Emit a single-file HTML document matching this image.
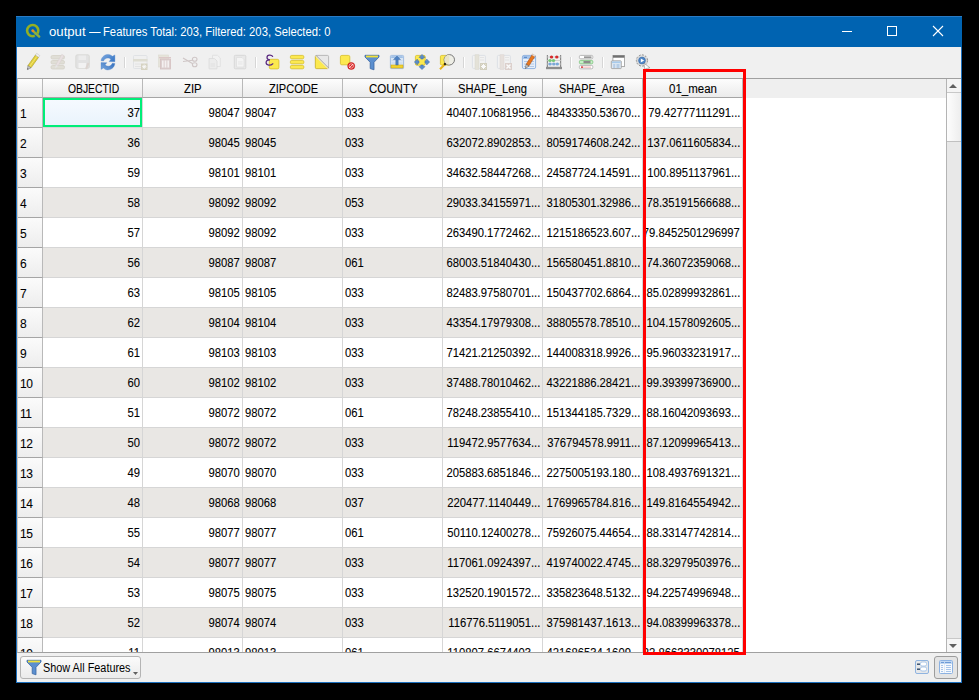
<!DOCTYPE html><html><head><meta charset="utf-8"><style>
*{margin:0;padding:0;box-sizing:border-box}
html,body{width:979px;height:700px;overflow:hidden;background:#000;font-family:"Liberation Sans",sans-serif;font-size:12px;color:#000}
.a{position:absolute}
svg{overflow:visible}
#win{left:16px;top:16px;width:946px;height:667px;background:#f0f0f0;border:1px solid #1c70be;border-top:none}
#title{left:16px;top:16px;width:946px;height:31px;background:#0063b1;border-top:1px solid #2a7cc6}
.ttext{top:25px;color:#fff;white-space:nowrap;line-height:14px}
#tbl{left:17px;top:78px;width:944px;height:575px;background:#fff;border-top:1px solid #a0a0a0;border-left:1px solid #cdc6be;border-bottom:1px solid #a0a0a0;overflow:hidden}
.hd{top:0;height:19px;background:linear-gradient(#fdfdfd,#ebebeb);border-right:1px solid #b9b9b9;border-bottom:1px solid #a5a5a5;text-align:center;line-height:20px;white-space:nowrap}
.vh{left:0;width:25px;background:linear-gradient(#fbfbfb,#ededed);border-right:1px solid #b9b9b9;border-bottom:1px solid #a5a5a5;padding-left:2px;line-height:33px;overflow:hidden;letter-spacing:-0.5px;-webkit-text-stroke:0.08px #000}
.c{height:30px;line-height:31px;border-right:1px solid #d6d6d6;border-bottom:1px solid #d6d6d6;white-space:nowrap;overflow:hidden;font-size:12.5px;-webkit-text-stroke:0.08px #000}
.c span{display:inline-block;transform:scaleX(0.9)}
.r span{transform-origin:100% 50%}
.l span{transform-origin:0 50%}
.r{display:flex;justify-content:flex-end;padding-right:2px}
.l{padding-left:2px}
.alt{background:#e9e7e4}
</style></head><body>
<div id="win" class="a"></div>
<div id="title" class="a"></div>
<svg class="a" style="left:24px;top:22px" width="18" height="18" viewBox="0 0 18 18"><circle cx="8.7" cy="8.6" r="5.6" fill="none" stroke="#93b023" stroke-width="2.6"/><path d="M11.5 12.5 L15 15.2" stroke="#0063b1" stroke-width="3.6"/><path d="M8.6 8.6 L15.2 14.6" stroke="#8cb040" stroke-width="2.4" stroke-linecap="round"/><circle cx="8.9" cy="8.8" r="1.4" fill="#f08a1c"/></svg>
<div class="a ttext" style="left:48.9px;transform:scaleX(1.097);transform-origin:0 0">output</div>
<div class="a ttext" style="left:89.2px;transform:scaleX(0.96);transform-origin:0 0">—</div>
<div class="a ttext" style="left:103.06px;transform:scaleX(0.9375);transform-origin:0 0">Features Total: 203, Filtered: 203, Selected: 0</div>
<svg class="a" style="left:830px;top:16px" width="130" height="31"><g stroke="#fff" stroke-width="1" fill="none" shape-rendering="crispEdges"><line x1="12" y1="15.5" x2="22" y2="15.5"/><rect x="57.5" y="10.5" width="9" height="9"/></g><g stroke="#fff" stroke-width="1.1" fill="none"><line x1="103" y1="10" x2="113" y2="20"/><line x1="113" y1="10" x2="103" y2="20"/></g></svg>
<svg class="a" style="left:24px;top:54px" width="16" height="16" viewBox="0 0 16 16"><path d="M3.89 11.64 L11.49 1.02 L14.59 3.24 L6.99 13.86 Z" fill="#e2d03c" stroke="#a89820" stroke-width="0.6" stroke-linejoin="round"/><path d="M5.44 12.75 L13.04 2.13" stroke="#f4e878" stroke-width="0.9"/><path d="M11.49 1.02 L12.65 -0.61 L15.75 1.61 L14.59 3.24 Z" fill="#f4f4f4" stroke="#b4b4b4" stroke-width="0.5"/><path d="M3.89 11.64 L6.99 13.86 L3.4 15.6 Z" fill="#c8c8c8" stroke="#707070" stroke-width="0.5" stroke-linejoin="round"/><path d="M3.4 15.6 L3.59 14.13 L4.73 14.95 Z" fill="#303030"/></svg>
<svg class="a" style="left:49px;top:54px" width="16" height="16" viewBox="0 0 16 16"><g fill="#e0ded6" stroke="#d4d2c8" stroke-width="0.8"><rect x="2" y="1.5" width="13.5" height="3.5" rx="1.5"/><rect x="2" y="6.5" width="13.5" height="3.5" rx="1.5"/><rect x="2" y="11.5" width="13.5" height="3.5" rx="1.5"/></g><g transform="rotate(30 10 8)"><rect x="8.6" y="0" width="2.6" height="12" fill="#e8e0e0" stroke="#d8d0d0" stroke-width="0.5"/><path d="M8.6 12 L11.2 12 L9.9 15.5Z" fill="#e6e6e6"/></g></svg>
<svg class="a" style="left:74px;top:54px" width="16" height="16" viewBox="0 0 16 16"><rect x="1.8" y="0.8" width="13.5" height="13.5" rx="1.5" fill="#e2e2e2" stroke="#d6d6d2" stroke-width="0.8"/><rect x="4.5" y="1.5" width="7.5" height="4.5" fill="#ececec"/><rect x="4.5" y="9" width="7.5" height="5" fill="#f2f2f2"/><path d="M12 15 L14.5 9" stroke="#dcd4d0" stroke-width="2"/></svg>
<svg class="a" style="left:99px;top:54px" width="16" height="16" viewBox="0 0 16 16"><defs><linearGradient id="rg1" x1="0" y1="0" x2="1" y2="0.6"><stop offset="0" stop-color="#7eaae0"/><stop offset="1" stop-color="#3f7cc8"/></linearGradient><linearGradient id="rg2" x1="1" y1="0.3" x2="0" y2="1"><stop offset="0" stop-color="#3a74c0"/><stop offset="1" stop-color="#7aa8de"/></linearGradient></defs><path d="M2 6.8 C2.6 2.2 6.5 0.3 9.3 0.4 C11.4 0.5 12.6 1.5 13.4 2.3 L15.9 0.9 L15.9 7.7 L10 7.6 L11.8 5.5 C11 4.6 10 4.1 8.8 4.1 C6.5 4.1 5.2 5.6 4.6 7 Z" fill="url(#rg1)" stroke="#4a7fc4" stroke-width="0.3"/><path d="M15.9 9.5 C15.3 14.1 11.4 16 8.6 15.9 C6.5 15.8 5.3 14.8 4.5 14 L2 15.4 L2 8.6 L7.9 8.7 L6.1 10.8 C6.9 11.7 7.9 12.2 9.1 12.2 C11.4 12.2 12.7 10.7 13.3 9.3 Z" fill="url(#rg2)" stroke="#4a7fc4" stroke-width="0.3"/></svg>
<div class="a" style="left:124px;top:57px;width:1px;height:11px;background:#d6d6d6"></div><div class="a" style="left:125px;top:57px;width:1px;height:11px;background:#fff"></div>
<svg class="a" style="left:132px;top:54px" width="18" height="16" viewBox="0 0 18 16"><rect x="1.5" y="1.5" width="13.5" height="13" rx="1" fill="#f0f0f0" stroke="#dcdee2" stroke-width="0.8"/><rect x="1" y="5" width="14.5" height="2.5" fill="#deddd2"/><g stroke="#e0e0e0" stroke-width="0.8"><line x1="3" y1="10" x2="9" y2="10"/><line x1="3" y1="12.5" x2="9" y2="12.5"/></g><rect x="9" y="9.5" width="6.5" height="6.5" fill="#d6d3c2"/><path d="M12.2 10.5 V15 M10 12.7 H14.5 M10.8 11.2 L13.8 14.2 M13.8 11.2 L10.8 14.2" stroke="#f8f8f8" stroke-width="0.9"/></svg>
<svg class="a" style="left:157px;top:54px" width="16" height="16" viewBox="0 0 16 16"><rect x="1.5" y="1" width="10" height="12" fill="#e6e4da" stroke="#dcdad0" stroke-width="0.6"/><rect x="2" y="3" width="12" height="1.2" fill="#dcc8c8"/><rect x="3.5" y="5" width="10" height="10" fill="#ddd0d0" stroke="#d4c0c0" stroke-width="0.8"/><g fill="#f4f0f0"><rect x="5" y="6.5" width="1.6" height="7"/><rect x="7.7" y="6.5" width="1.6" height="7"/><rect x="10.4" y="6.5" width="1.6" height="7"/></g></svg>
<svg class="a" style="left:182px;top:54px" width="16" height="16" viewBox="0 0 16 16"><g fill="none" stroke="#cfc6c6" stroke-width="1.1"><ellipse cx="12.7" cy="5.3" rx="2.3" ry="2"/><ellipse cx="12.7" cy="10.8" rx="2.3" ry="2"/><path d="M1 4 L10.8 9.8 M1 7.5 L10.8 6.2"/></g></svg>
<svg class="a" style="left:207px;top:54px" width="16" height="16" viewBox="0 0 16 16"><path d="M5.5 1.3 H10.5 L13.3 4 V12.5 H5.5 Z" fill="#f2f2f2" stroke="#dedede" stroke-width="0.8"/><path d="M2 4.5 H7.5 L10 7 V14.8 H2 Z" fill="#ececec" stroke="#dadada" stroke-width="0.8"/><g stroke="#dcdcdc" stroke-width="0.7"><line x1="3.5" y1="10" x2="8" y2="10"/><line x1="3.5" y1="12" x2="8" y2="12"/></g></svg>
<svg class="a" style="left:232px;top:54px" width="16" height="16" viewBox="0 0 16 16"><rect x="2.3" y="1.3" width="11.5" height="13.5" rx="1" fill="#e8e8e8" stroke="#d6d6d6" stroke-width="0.9"/><path d="M4.5 3.5 H10 L12 5.5 V13 H4.5 Z" fill="#f4f4f4" stroke="#dadada" stroke-width="0.6"/><g stroke="#dcdcdc" stroke-width="0.6"><line x1="6" y1="8" x2="10.5" y2="8"/><line x1="6" y1="10" x2="10.5" y2="10"/></g></svg>
<div class="a" style="left:255px;top:57px;width:1px;height:11px;background:#d6d6d6"></div><div class="a" style="left:256px;top:57px;width:1px;height:11px;background:#fff"></div>
<svg class="a" style="left:264px;top:54px" width="16" height="16" viewBox="0 0 16 16"><rect x="5.3" y="5.3" width="9.6" height="9.6" rx="1.5" fill="#fce94f" stroke="#d6bd26" stroke-width="0.8"/><path d="M8.6 2.4 C7.4 0.6 3 0.7 3 3.4 C3 5 4.3 5.8 6 5.8 C3.9 5.8 2.1 6.8 2.1 8.6 C2.1 11.6 6.6 11.9 8.8 9.8" fill="none" stroke="#5a2a80" stroke-width="1.25" stroke-linecap="round"/></svg>
<svg class="a" style="left:289px;top:54px" width="16" height="16" viewBox="0 0 16 16"><g fill="#fce94f" stroke="#d6bd26" stroke-width="0.8"><rect x="1.4" y="1.4" width="13.4" height="3.4" rx="1.3"/><rect x="1.4" y="6.4" width="13.4" height="3.4" rx="1.3"/><rect x="1.4" y="11.4" width="13.4" height="3.4" rx="1.3"/></g></svg>
<svg class="a" style="left:314px;top:54px" width="16" height="16" viewBox="0 0 16 16"><rect x="1.4" y="1.4" width="13.2" height="13.2" rx="1.2" fill="#e8e8e8" stroke="#ababab" stroke-width="0.8"/><path d="M1.4 2 L14 14.6 H2.6 A1.2 1.2 0 0 1 1.4 13.4 Z" fill="#fce94f" stroke="#d6bd26" stroke-width="0.8"/><path d="M1.9 1.3 L14.7 14.1" stroke="#8a8a8a" stroke-width="0.8"/><path d="M1.4 2 L14 14.6" stroke="#fff" stroke-width="0.8"/></svg>
<svg class="a" style="left:339px;top:54px" width="16" height="16" viewBox="0 0 16 16"><rect x="1.4" y="1.4" width="9.4" height="9.4" rx="1.4" fill="#fce94f" stroke="#d6bd26" stroke-width="0.8"/><circle cx="12.2" cy="12" r="3.6" fill="#d91c1c" stroke="#c01010" stroke-width="0.4"/><circle cx="12.2" cy="12" r="2.2" fill="none" stroke="#f6c8c8" stroke-width="0.8"/><path d="M10.3 13.9 L14.1 10.1" stroke="#fff" stroke-width="0.9"/></svg>
<svg class="a" style="left:364px;top:54px" width="16" height="16" viewBox="0 0 16 16"><path d="M1 1.3 H15 V3 L10 8.3 V15.8 L6.2 14.6 V8.3 L1 3 Z" fill="#5b8fcf" stroke="#3b67a3" stroke-width="0.8" stroke-linejoin="round"/><rect x="2" y="1.6" width="12" height="1.8" fill="#f2e23a"/></svg>
<svg class="a" style="left:389px;top:54px" width="16" height="16" viewBox="0 0 16 16"><rect x="1.4" y="1.4" width="13.2" height="13.2" rx="1" fill="#d9e6f5" stroke="#8fb1dc" stroke-width="0.8"/><rect x="2.2" y="2.2" width="11.6" height="1.8" fill="#9fc0e6"/><g stroke="#c6d6ea" stroke-width="0.8"><line x1="2.5" y1="6.5" x2="13.5" y2="6.5"/><line x1="2.5" y1="9" x2="13.5" y2="9"/></g><rect x="2" y="11" width="12" height="3" fill="#f2d22e" stroke="#c9a818" stroke-width="0.6"/><path d="M8 2 L11.5 5.5 H9.2 V11 H6.8 V5.5 H4.5 Z" fill="#4d82c4" stroke="#335f99" stroke-width="0.4"/></svg>
<svg class="a" style="left:414px;top:54px" width="16" height="16" viewBox="0 0 16 16"><rect x="1.4" y="1.4" width="9.8" height="9.8" rx="1.3" fill="#fce94f" stroke="#d6bd26" stroke-width="0.8"/><g fill="#5b8dcc" stroke="#3d6aa8" stroke-width="0.5" stroke-linejoin="round"><path d="M8 0.4 L11 3.4 L9.2 3.4 L9.2 5 L6.8 5 L6.8 3.4 L5 3.4 Z"/><path d="M8 15.6 L11 12.6 L9.2 12.6 L9.2 11 L6.8 11 L6.8 12.6 L5 12.6 Z"/><path d="M0.4 8 L3.4 5 L3.4 6.8 L5 6.8 L5 9.2 L3.4 9.2 L3.4 11 Z"/><path d="M15.6 8 L12.6 5 L12.6 6.8 L11 6.8 L11 9.2 L12.6 9.2 L12.6 11 Z"/></g></svg>
<svg class="a" style="left:439px;top:54px" width="16" height="16" viewBox="0 0 16 16"><rect x="1.4" y="1.4" width="9.6" height="9.6" rx="1.3" fill="#fce94f" stroke="#d6bd26" stroke-width="0.8"/><circle cx="10.3" cy="5.8" r="5.2" fill="#eeeee6" stroke="#6c6c6c" stroke-width="0.9"/><path d="M10.3 0.8 A5 5 0 0 0 10.3 10.8 Z" fill="#e8e4c8"/><path d="M6.3 9.8 L1 15.3" stroke="#e7b416" stroke-width="2"/><path d="M6.6 9.4 L5.3 10.8" stroke="#111" stroke-width="2"/></svg>
<div class="a" style="left:463px;top:57px;width:1px;height:11px;background:#d6d6d6"></div><div class="a" style="left:464px;top:57px;width:1px;height:11px;background:#fff"></div>
<svg class="a" style="left:471px;top:54px" width="16" height="16" viewBox="0 0 16 16"><rect x="1.4" y="1.4" width="13" height="13" rx="1" fill="#f2f2f2" stroke="#d8dce2" stroke-width="0.8"/><rect x="4" y="0.8" width="4" height="14.5" fill="#e4e2d8" stroke="#d8d6cc" stroke-width="0.5"/><g stroke="#dcdcdc" stroke-width="0.7"><line x1="9" y1="3.5" x2="13" y2="3.5"/><line x1="9" y1="6" x2="13" y2="6"/></g><rect x="9" y="9" width="7" height="7" fill="#d2cfbe"/><path d="M12.5 10 V15 M10 12.5 H15 M10.7 10.7 L14.3 14.3 M14.3 10.7 L10.7 14.3" stroke="#fafafa" stroke-width="1"/></svg>
<svg class="a" style="left:496px;top:54px" width="16" height="16" viewBox="0 0 16 16"><rect x="1.4" y="1.4" width="13" height="13" rx="1" fill="#f2f2f2" stroke="#d8dce2" stroke-width="0.8"/><rect x="4" y="0.8" width="4" height="14.5" fill="#e6e0dc" stroke="#dcd4d0" stroke-width="0.5"/><g stroke="#dcdcdc" stroke-width="0.7"><line x1="9" y1="3.5" x2="13" y2="3.5"/><line x1="9" y1="6" x2="13" y2="6"/></g><rect x="9" y="9" width="7" height="7" fill="#dcd0cc"/><path d="M10.5 10.5 L14.5 14.5 M14.5 10.5 L10.5 14.5" stroke="#fafafa" stroke-width="1.4"/></svg>
<svg class="a" style="left:521px;top:54px" width="16" height="16" viewBox="0 0 16 16"><rect x="1.4" y="1.4" width="13.2" height="13.2" rx="1.5" fill="#e6eef8" stroke="#86acdc" stroke-width="0.9"/><rect x="2" y="2" width="12" height="3" fill="#a6c4ea"/><rect x="3" y="2.8" width="3" height="1.2" fill="#5d8ccc"/><g stroke="#9ab8e0" stroke-width="0.7"><line x1="3" y1="7.5" x2="13" y2="7.5"/><line x1="3" y1="10" x2="13" y2="10"/><line x1="3" y1="12.5" x2="13" y2="12.5"/></g><g transform="rotate(32 8 8)"><rect x="6.8" y="-0.5" width="3.2" height="12" fill="#e6761e" stroke="#a84c10" stroke-width="0.5"/><rect x="6.8" y="-1" width="3.2" height="1.6" fill="#ddd"/><path d="M6.8 11.5 H10 L8.4 15.5 Z" fill="#d8d0c8" stroke="#505050" stroke-width="0.5"/></g></svg>
<svg class="a" style="left:546px;top:54px" width="16" height="16" viewBox="0 0 16 16"><rect x="0.8" y="1" width="1.2" height="13.5" fill="#8a8a8a"/><rect x="14" y="1" width="1.2" height="13.5" fill="#8a8a8a"/><g stroke="#c8c8c8" stroke-width="0.8"><line x1="1" y1="3" x2="15" y2="3"/><line x1="1" y1="6.5" x2="15" y2="6.5"/><line x1="1" y1="10" x2="15" y2="10"/></g><g fill="#d42a2a"><ellipse cx="5.5" cy="3" rx="1.7" ry="1.6"/><ellipse cx="10.8" cy="3" rx="1.7" ry="1.6"/></g><g fill="#78c878"><ellipse cx="4" cy="6.5" rx="1.7" ry="1.6"/><ellipse cx="7.5" cy="6.5" rx="1.7" ry="1.6"/></g><g fill="#7aa8d8"><ellipse cx="4" cy="10" rx="1.7" ry="1.6"/><ellipse cx="7.8" cy="10" rx="1.7" ry="1.6"/><ellipse cx="11.3" cy="10" rx="1.7" ry="1.6"/></g><rect x="0" y="12.8" width="16" height="2.4" fill="#8c8c8c"/></svg>
<div class="a" style="left:570px;top:57px;width:1px;height:11px;background:#d6d6d6"></div><div class="a" style="left:571px;top:57px;width:1px;height:11px;background:#fff"></div>
<svg class="a" style="left:578px;top:54px" width="16" height="16" viewBox="0 0 16 16"><rect x="1.4" y="1.4" width="13.4" height="3.4" rx="1.2" fill="#fff" stroke="#a8a8a8" stroke-width="0.8"/><rect x="6" y="2.6" width="7.5" height="1" fill="#555"/><rect x="1.4" y="6.4" width="13.4" height="3.4" rx="1.2" fill="#c6f2c6" stroke="#78c078" stroke-width="0.8"/><rect x="5.5" y="7" width="7" height="2.2" fill="#8c8c8c"/><rect x="1.4" y="11.4" width="13.4" height="3.4" rx="1.2" fill="#fff" stroke="#a8a8a8" stroke-width="0.8"/><circle cx="4" cy="13.1" r="0.9" fill="#c00"/><rect x="5" y="12.7" width="8" height="0.8" fill="#f0a0a0"/></svg>
<div class="a" style="left:602px;top:57px;width:1px;height:11px;background:#d6d6d6"></div><div class="a" style="left:603px;top:57px;width:1px;height:11px;background:#fff"></div>
<svg class="a" style="left:610px;top:54px" width="16" height="16" viewBox="0 0 16 16"><rect x="2.9" y="1.4" width="11.6" height="11.2" fill="#fff" stroke="#9a9a9a" stroke-width="0.8"/><rect x="3" y="1.4" width="11.4" height="2.3" fill="#707070"/><rect x="1.3" y="6.8" width="10" height="7.8" rx="0.8" fill="#dfe8f2" stroke="#9a9a9a" stroke-width="0.8"/><rect x="2" y="7.5" width="8.6" height="1.6" fill="#a8cbec"/><g fill="#b6cde6"><rect x="3.2" y="10" width="2" height="4"/><rect x="6.5" y="10" width="3" height="4"/></g></svg>
<svg class="a" style="left:635px;top:54px" width="16" height="16" viewBox="0 0 16 16"><circle cx="7" cy="6.5" r="5.6" fill="none" stroke="#8a8a8a" stroke-width="1" stroke-dasharray="2 1.2"/><circle cx="7" cy="6.5" r="4.6" fill="#f0f0f0" stroke="#b0b0b0" stroke-width="0.5"/><circle cx="7" cy="6.5" r="3.5" fill="#4f86c6" stroke="#2f5f9a" stroke-width="0.5"/><path d="M5.8 4.6 L9.2 6.5 L5.8 8.4 Z" fill="#fff"/><path d="M9 9.2 L15 13.8 L12.6 14 L13.6 15.8 L12.6 16 L11.6 14.4 L9.8 15.4 Z" fill="#fff" stroke="#7a7a7a" stroke-width="0.5"/></svg>
<div id="tbl" class="a">
<div class="a" style="left:0;top:0;width:944px;height:19px;background:#efefef"></div>
<div class="a hd" style="left:0;width:25px"></div>
<div class="a hd" style="left:25px;width:100px"></div>
<div class="a hd" style="left:125px;width:100px"></div>
<div class="a hd" style="left:225px;width:100px"></div>
<div class="a hd" style="left:325px;width:100px"></div>
<div class="a hd" style="left:425px;width:100px"></div>
<div class="a hd" style="left:525px;width:100px"></div>
<div class="a hd" style="left:625px;width:100px"></div>
<div class="a" style="left:50.0px;top:2px;line-height:16px;white-space:nowrap;-webkit-text-stroke:0.1px #000;transform:scaleX(0.8621);transform-origin:0 0">OBJECTID</div>
<div class="a" style="left:166.0px;top:2px;line-height:16px;white-space:nowrap;-webkit-text-stroke:0.1px #000;transform:scaleX(0.9412);transform-origin:0 0">ZIP</div>
<div class="a" style="left:251.0px;top:2px;line-height:16px;white-space:nowrap;-webkit-text-stroke:0.1px #000;transform:scaleX(0.9231);transform-origin:0 0">ZIPCODE</div>
<div class="a" style="left:351.0px;top:2px;line-height:16px;white-space:nowrap;-webkit-text-stroke:0.1px #000;transform:scaleX(0.9592);transform-origin:0 0">COUNTY</div>
<div class="a" style="left:440.07px;top:2px;line-height:16px;white-space:nowrap;-webkit-text-stroke:0.1px #000;transform:scaleX(0.9306);transform-origin:0 0">SHAPE_Leng</div>
<div class="a" style="left:541.1px;top:2px;line-height:16px;white-space:nowrap;-webkit-text-stroke:0.1px #000;transform:scaleX(0.9014);transform-origin:0 0">SHAPE_Area</div>
<div class="a" style="left:651.0px;top:2px;line-height:16px;white-space:nowrap;-webkit-text-stroke:0.1px #000;transform:scaleX(0.9583);transform-origin:0 0">01_mean</div>
<div class="a vh" style="top:19px;height:30px">1</div>
<div class="a c r" style="left:25px;top:19px;width:100px;background:linear-gradient(#f6faff,#e9f3fc)"><span>37</span></div>
<div class="a c r" style="left:125px;top:19px;width:100px"><span>98047</span></div>
<div class="a c l" style="left:225px;top:19px;width:100px"><span>98047</span></div>
<div class="a c l" style="left:325px;top:19px;width:100px"><span>033</span></div>
<div class="a c r" style="left:425px;top:19px;width:100px"><span>40407.10681956...</span></div>
<div class="a c r" style="left:525px;top:19px;width:100px"><span>48433350.53670...</span></div>
<div class="a c r" style="left:625px;top:19px;width:100px"><span>79.42777111291...</span></div>
<div class="a vh" style="top:49px;height:30px">2</div>
<div class="a c r alt" style="left:25px;top:49px;width:100px"><span>36</span></div>
<div class="a c r alt" style="left:125px;top:49px;width:100px"><span>98045</span></div>
<div class="a c l alt" style="left:225px;top:49px;width:100px"><span>98045</span></div>
<div class="a c l alt" style="left:325px;top:49px;width:100px"><span>033</span></div>
<div class="a c r alt" style="left:425px;top:49px;width:100px"><span>632072.8902853...</span></div>
<div class="a c r alt" style="left:525px;top:49px;width:100px"><span>8059174608.242...</span></div>
<div class="a c r alt" style="left:625px;top:49px;width:100px"><span>137.0611605834...</span></div>
<div class="a vh" style="top:79px;height:30px">3</div>
<div class="a c r" style="left:25px;top:79px;width:100px"><span>59</span></div>
<div class="a c r" style="left:125px;top:79px;width:100px"><span>98101</span></div>
<div class="a c l" style="left:225px;top:79px;width:100px"><span>98101</span></div>
<div class="a c l" style="left:325px;top:79px;width:100px"><span>033</span></div>
<div class="a c r" style="left:425px;top:79px;width:100px"><span>34632.58447268...</span></div>
<div class="a c r" style="left:525px;top:79px;width:100px"><span>24587724.14591...</span></div>
<div class="a c r" style="left:625px;top:79px;width:100px"><span>100.8951137961...</span></div>
<div class="a vh" style="top:109px;height:30px">4</div>
<div class="a c r alt" style="left:25px;top:109px;width:100px"><span>58</span></div>
<div class="a c r alt" style="left:125px;top:109px;width:100px"><span>98092</span></div>
<div class="a c l alt" style="left:225px;top:109px;width:100px"><span>98092</span></div>
<div class="a c l alt" style="left:325px;top:109px;width:100px"><span>053</span></div>
<div class="a c r alt" style="left:425px;top:109px;width:100px"><span>29033.34155971...</span></div>
<div class="a c r alt" style="left:525px;top:109px;width:100px"><span>31805301.32986...</span></div>
<div class="a c r alt" style="left:625px;top:109px;width:100px"><span>78.35191566688...</span></div>
<div class="a vh" style="top:139px;height:30px">5</div>
<div class="a c r" style="left:25px;top:139px;width:100px"><span>57</span></div>
<div class="a c r" style="left:125px;top:139px;width:100px"><span>98092</span></div>
<div class="a c l" style="left:225px;top:139px;width:100px"><span>98092</span></div>
<div class="a c l" style="left:325px;top:139px;width:100px"><span>033</span></div>
<div class="a c r" style="left:425px;top:139px;width:100px"><span>263490.1772462...</span></div>
<div class="a c r" style="left:525px;top:139px;width:100px"><span>1215186523.607...</span></div>
<div class="a c r" style="left:625px;top:139px;width:100px"><span>79.8452501296997</span></div>
<div class="a vh" style="top:169px;height:30px">6</div>
<div class="a c r alt" style="left:25px;top:169px;width:100px"><span>56</span></div>
<div class="a c r alt" style="left:125px;top:169px;width:100px"><span>98087</span></div>
<div class="a c l alt" style="left:225px;top:169px;width:100px"><span>98087</span></div>
<div class="a c l alt" style="left:325px;top:169px;width:100px"><span>061</span></div>
<div class="a c r alt" style="left:425px;top:169px;width:100px"><span>68003.51840430...</span></div>
<div class="a c r alt" style="left:525px;top:169px;width:100px"><span>156580451.8810...</span></div>
<div class="a c r alt" style="left:625px;top:169px;width:100px"><span>74.36072359068...</span></div>
<div class="a vh" style="top:199px;height:30px">7</div>
<div class="a c r" style="left:25px;top:199px;width:100px"><span>63</span></div>
<div class="a c r" style="left:125px;top:199px;width:100px"><span>98105</span></div>
<div class="a c l" style="left:225px;top:199px;width:100px"><span>98105</span></div>
<div class="a c l" style="left:325px;top:199px;width:100px"><span>033</span></div>
<div class="a c r" style="left:425px;top:199px;width:100px"><span>82483.97580701...</span></div>
<div class="a c r" style="left:525px;top:199px;width:100px"><span>150437702.6864...</span></div>
<div class="a c r" style="left:625px;top:199px;width:100px"><span>85.02899932861...</span></div>
<div class="a vh" style="top:229px;height:30px">8</div>
<div class="a c r alt" style="left:25px;top:229px;width:100px"><span>62</span></div>
<div class="a c r alt" style="left:125px;top:229px;width:100px"><span>98104</span></div>
<div class="a c l alt" style="left:225px;top:229px;width:100px"><span>98104</span></div>
<div class="a c l alt" style="left:325px;top:229px;width:100px"><span>033</span></div>
<div class="a c r alt" style="left:425px;top:229px;width:100px"><span>43354.17979308...</span></div>
<div class="a c r alt" style="left:525px;top:229px;width:100px"><span>38805578.78510...</span></div>
<div class="a c r alt" style="left:625px;top:229px;width:100px"><span>104.1578092605...</span></div>
<div class="a vh" style="top:259px;height:30px">9</div>
<div class="a c r" style="left:25px;top:259px;width:100px"><span>61</span></div>
<div class="a c r" style="left:125px;top:259px;width:100px"><span>98103</span></div>
<div class="a c l" style="left:225px;top:259px;width:100px"><span>98103</span></div>
<div class="a c l" style="left:325px;top:259px;width:100px"><span>033</span></div>
<div class="a c r" style="left:425px;top:259px;width:100px"><span>71421.21250392...</span></div>
<div class="a c r" style="left:525px;top:259px;width:100px"><span>144008318.9926...</span></div>
<div class="a c r" style="left:625px;top:259px;width:100px"><span>95.96033231917...</span></div>
<div class="a vh" style="top:289px;height:30px">10</div>
<div class="a c r alt" style="left:25px;top:289px;width:100px"><span>60</span></div>
<div class="a c r alt" style="left:125px;top:289px;width:100px"><span>98102</span></div>
<div class="a c l alt" style="left:225px;top:289px;width:100px"><span>98102</span></div>
<div class="a c l alt" style="left:325px;top:289px;width:100px"><span>033</span></div>
<div class="a c r alt" style="left:425px;top:289px;width:100px"><span>37488.78010462...</span></div>
<div class="a c r alt" style="left:525px;top:289px;width:100px"><span>43221886.28421...</span></div>
<div class="a c r alt" style="left:625px;top:289px;width:100px"><span>99.39399736900...</span></div>
<div class="a vh" style="top:319px;height:30px">11</div>
<div class="a c r" style="left:25px;top:319px;width:100px"><span>51</span></div>
<div class="a c r" style="left:125px;top:319px;width:100px"><span>98072</span></div>
<div class="a c l" style="left:225px;top:319px;width:100px"><span>98072</span></div>
<div class="a c l" style="left:325px;top:319px;width:100px"><span>061</span></div>
<div class="a c r" style="left:425px;top:319px;width:100px"><span>78248.23855410...</span></div>
<div class="a c r" style="left:525px;top:319px;width:100px"><span>151344185.7329...</span></div>
<div class="a c r" style="left:625px;top:319px;width:100px"><span>88.16042093693...</span></div>
<div class="a vh" style="top:349px;height:30px">12</div>
<div class="a c r alt" style="left:25px;top:349px;width:100px"><span>50</span></div>
<div class="a c r alt" style="left:125px;top:349px;width:100px"><span>98072</span></div>
<div class="a c l alt" style="left:225px;top:349px;width:100px"><span>98072</span></div>
<div class="a c l alt" style="left:325px;top:349px;width:100px"><span>033</span></div>
<div class="a c r alt" style="left:425px;top:349px;width:100px"><span>119472.9577634...</span></div>
<div class="a c r alt" style="left:525px;top:349px;width:100px"><span>376794578.9911...</span></div>
<div class="a c r alt" style="left:625px;top:349px;width:100px"><span>87.12099965413...</span></div>
<div class="a vh" style="top:379px;height:30px">13</div>
<div class="a c r" style="left:25px;top:379px;width:100px"><span>49</span></div>
<div class="a c r" style="left:125px;top:379px;width:100px"><span>98070</span></div>
<div class="a c l" style="left:225px;top:379px;width:100px"><span>98070</span></div>
<div class="a c l" style="left:325px;top:379px;width:100px"><span>033</span></div>
<div class="a c r" style="left:425px;top:379px;width:100px"><span>205883.6851846...</span></div>
<div class="a c r" style="left:525px;top:379px;width:100px"><span>2275005193.180...</span></div>
<div class="a c r" style="left:625px;top:379px;width:100px"><span>108.4937691321...</span></div>
<div class="a vh" style="top:409px;height:30px">14</div>
<div class="a c r alt" style="left:25px;top:409px;width:100px"><span>48</span></div>
<div class="a c r alt" style="left:125px;top:409px;width:100px"><span>98068</span></div>
<div class="a c l alt" style="left:225px;top:409px;width:100px"><span>98068</span></div>
<div class="a c l alt" style="left:325px;top:409px;width:100px"><span>037</span></div>
<div class="a c r alt" style="left:425px;top:409px;width:100px"><span>220477.1140449...</span></div>
<div class="a c r alt" style="left:525px;top:409px;width:100px"><span>1769965784.816...</span></div>
<div class="a c r alt" style="left:625px;top:409px;width:100px"><span>149.8164554942...</span></div>
<div class="a vh" style="top:439px;height:30px">15</div>
<div class="a c r" style="left:25px;top:439px;width:100px"><span>55</span></div>
<div class="a c r" style="left:125px;top:439px;width:100px"><span>98077</span></div>
<div class="a c l" style="left:225px;top:439px;width:100px"><span>98077</span></div>
<div class="a c l" style="left:325px;top:439px;width:100px"><span>061</span></div>
<div class="a c r" style="left:425px;top:439px;width:100px"><span>50110.12400278...</span></div>
<div class="a c r" style="left:525px;top:439px;width:100px"><span>75926075.44654...</span></div>
<div class="a c r" style="left:625px;top:439px;width:100px"><span>88.33147742814...</span></div>
<div class="a vh" style="top:469px;height:30px">16</div>
<div class="a c r alt" style="left:25px;top:469px;width:100px"><span>54</span></div>
<div class="a c r alt" style="left:125px;top:469px;width:100px"><span>98077</span></div>
<div class="a c l alt" style="left:225px;top:469px;width:100px"><span>98077</span></div>
<div class="a c l alt" style="left:325px;top:469px;width:100px"><span>033</span></div>
<div class="a c r alt" style="left:425px;top:469px;width:100px"><span>117061.0924397...</span></div>
<div class="a c r alt" style="left:525px;top:469px;width:100px"><span>419740022.4745...</span></div>
<div class="a c r alt" style="left:625px;top:469px;width:100px"><span>88.32979503976...</span></div>
<div class="a vh" style="top:499px;height:30px">17</div>
<div class="a c r" style="left:25px;top:499px;width:100px"><span>53</span></div>
<div class="a c r" style="left:125px;top:499px;width:100px"><span>98075</span></div>
<div class="a c l" style="left:225px;top:499px;width:100px"><span>98075</span></div>
<div class="a c l" style="left:325px;top:499px;width:100px"><span>033</span></div>
<div class="a c r" style="left:425px;top:499px;width:100px"><span>132520.1901572...</span></div>
<div class="a c r" style="left:525px;top:499px;width:100px"><span>335823648.5132...</span></div>
<div class="a c r" style="left:625px;top:499px;width:100px"><span>94.22574996948...</span></div>
<div class="a vh" style="top:529px;height:30px">18</div>
<div class="a c r alt" style="left:25px;top:529px;width:100px"><span>52</span></div>
<div class="a c r alt" style="left:125px;top:529px;width:100px"><span>98074</span></div>
<div class="a c l alt" style="left:225px;top:529px;width:100px"><span>98074</span></div>
<div class="a c l alt" style="left:325px;top:529px;width:100px"><span>033</span></div>
<div class="a c r alt" style="left:425px;top:529px;width:100px"><span>116776.5119051...</span></div>
<div class="a c r alt" style="left:525px;top:529px;width:100px"><span>375981437.1613...</span></div>
<div class="a c r alt" style="left:625px;top:529px;width:100px"><span>94.08399963378...</span></div>
<div class="a vh" style="top:559px;height:30px">19</div>
<div class="a c r" style="left:25px;top:559px;width:100px"><span>11</span></div>
<div class="a c r" style="left:125px;top:559px;width:100px"><span>98013</span></div>
<div class="a c l" style="left:225px;top:559px;width:100px"><span>98013</span></div>
<div class="a c l" style="left:325px;top:559px;width:100px"><span>061</span></div>
<div class="a c r" style="left:425px;top:559px;width:100px"><span>110807.6674403...</span></div>
<div class="a c r" style="left:525px;top:559px;width:100px"><span>421686534.1609...</span></div>
<div class="a c r" style="left:625px;top:559px;width:100px"><span>82.8663330078125</span></div>
<div class="a" style="left:25px;top:19px;width:99px;height:29px;border:2px solid #00ee78"></div>
<div class="a" style="left:928px;top:0;width:16px;height:574px;background:#e8e8e8;border-left:1px solid #b4b4b4"></div>
<div class="a" style="left:929px;top:0;width:15px;height:14px;background:#f4f4f4;border-bottom:1px solid #c8c8c8"></div>
<svg class="a" style="left:931px;top:5px" width="8" height="4"><path d="M0 4 L4 0 L8 4Z" fill="#606060"/></svg>
<div class="a" style="left:929px;top:14px;width:15px;height:49px;background:linear-gradient(90deg,#fdfdfd,#ececec);border-bottom:1px solid #c0c0c0"></div>
<div class="a" style="left:929px;top:559px;width:15px;height:15px;background:#f6f6f6;border-top:1px solid #c8c8c8"></div>
<svg class="a" style="left:931px;top:565px" width="8" height="4"><path d="M0 0 L4 4 L8 0Z" fill="#606060"/></svg>
</div>
<div class="a" style="left:643px;top:69px;width:103px;height:586px;border:3px solid #f00"></div>
<div class="a" style="left:20px;top:656px;width:121px;height:23px;border:1px solid #b4b4b4;border-radius:3px;background:linear-gradient(#fbfbfb,#ebebeb)"></div>
<svg class="a" style="left:26px;top:659px" width="16" height="16" viewBox="0 0 16 16"><path d="M1 1.3 H15 V3 L10 8.3 V15.8 L6.2 14.6 V8.3 L1 3 Z" fill="#5b8fcf" stroke="#3b67a3" stroke-width="0.8" stroke-linejoin="round"/><rect x="2" y="1.6" width="12" height="1.8" fill="#f2e23a"/></svg>
<div class="a" style="left:43.09px;top:661px;line-height:14px;white-space:nowrap;transform:scaleX(0.9053);transform-origin:0 0">Show All Features</div>
<svg class="a" style="left:133px;top:672px" width="5" height="3"><path d="M0 0 H5 L2.5 3Z" fill="#606060"/></svg>
<svg class="a" style="left:915px;top:660px" width="14" height="14" viewBox="0 0 14 14"><rect x="0.5" y="0.5" width="13" height="13" rx="1.5" fill="#e6e8ea" stroke="#90b4e0" stroke-width="1"/><rect x="2" y="3.5" width="3" height="1.4" fill="#2c4868"/><rect x="2" y="8.5" width="3" height="1.4" fill="#2c4868"/><rect x="5.5" y="2" width="6" height="4" rx="1.5" fill="#fff" stroke="#9cbce4" stroke-width="0.8"/><rect x="5.5" y="7" width="6" height="4" rx="1.5" fill="#fff" stroke="#9cbce4" stroke-width="0.8"/></svg>
<div class="a" style="left:934px;top:656px;width:24px;height:23px;border:1px solid #9c9c9c;border-radius:3px;background:#e4e4e4"></div>
<svg class="a" style="left:939px;top:660px" width="14" height="14" viewBox="0 0 14 14"><rect x="0.5" y="0.5" width="13" height="13" rx="1" fill="#f6f9fd" stroke="#8cb2e2" stroke-width="1"/><rect x="1" y="1" width="12" height="3" fill="#c2d8f2"/><g fill="#6d9ad6"><rect x="2" y="2" width="3" height="1"/><rect x="6" y="2" width="6" height="1"/></g><rect x="5" y="4" width="1" height="9" fill="#dce8f6"/><g fill="#a9c6ea"><rect x="2" y="5" width="2" height="1"/><rect x="7" y="5" width="5" height="1"/><rect x="2" y="7" width="2" height="1"/><rect x="7" y="7" width="5" height="1"/><rect x="2" y="9" width="2" height="1"/><rect x="7" y="9" width="5" height="1"/><rect x="2" y="11" width="2" height="1"/><rect x="7" y="11" width="5" height="1"/></g></svg>
</body></html>
